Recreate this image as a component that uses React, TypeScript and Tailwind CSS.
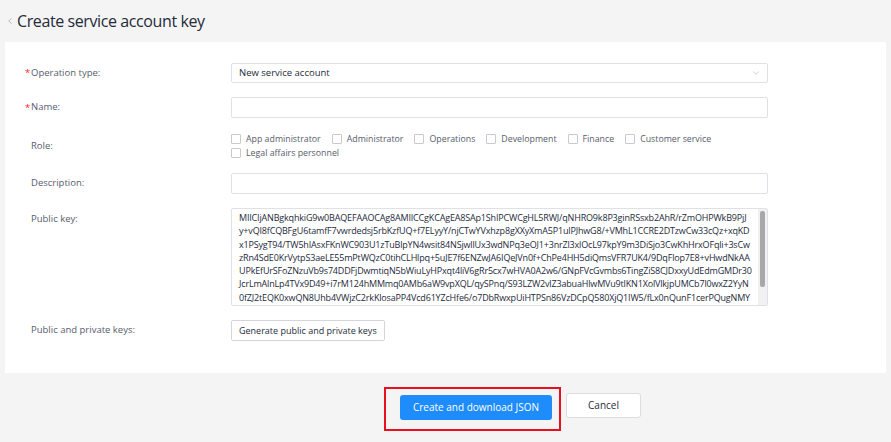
import { ChevronDown, ChevronLeft } from 'lucide-react';

const roles = [
  'App administrator',
  'Administrator',
  'Operations',
  'Development',
  'Finance',
  'Customer service',
  'Legal affairs personnel',
];

const keyLines = [
  'MIICIjANBgkqhkiG9w0BAQEFAAOCAg8AMIICCgKCAgEA8SAp1ShIPCWCgHL5RWJ/qNHRO9k8P3ginRSsxb2AhR/rZmOHPWkB9PjJ',
  'y+vQI8fCQBFgU6tamfF7vwrdedsj5rbKzfUQ+f7ELyyY/njCTwYVxhzp8gXXyXmA5P1ulPJhwG8/+VMhL1CCRE2DTzwCw33cQz+xqKD',
  'x1PSygT94/TW5hIAsxFKnWC903U1zTuBlpYN4wsit84NSjwllUx3wdNPq3eOJ1+3nrZl3xlOcL97kpY9m3DiSjo3CwKhHrxOFqli+3sCw',
  'zRn4SdE0KrVytpS3aeLE55mPtWQzC0tihCLHlpq+5uJE7f6ENZwJA6IQeJVn0f+ChPe4HH5diQmsVFR7UK4/9DqFlop7E8+vHwdNkAA',
  'UPkEfUrSFoZNzuVb9s74DDFjDwmtiqN5bWiuLyHPxqt4liV6gRr5cx7wHVA0A2w6/GNpFVcGvmbs6TingZiS8CJDxxyUdEdmGMDr30',
  'JcrLmAlnLp4TVx9D49+i7rM124hMMmq0AMb6aW9vpXQL/qySPnq/S93LZW2vlZ3abuaHlwMVu9tlKN1XolVlkjpUMCb7l0wxZ2YyN',
  '0fZJ2tEQK0xwQN8Uhb4VWjzC2rkKlosaPP4Vcd61YZcHfe6/o7DbRwxpUiHTPSn86VzDCpQ580XjQ1IW5/fLx0nQunF1cerPQugNMY',
  'eJrBnQ1hXkP2wVt7Y9sZ3dA5',
];

function Label({ text, required }: { text: string; required?: boolean }) {
  return (
    <div className="flex w-[226px] shrink-0 items-center pl-[20px] text-[9.5px] text-[#575d6c]">
      <span className="w-[6px] text-[#f22] leading-none">{required ? '*' : ''}</span>
      <span>{text}:</span>
    </div>
  );
}

function Checkbox({ label }: { label: string }) {
  return (
    <div className="mr-[11px] flex items-center gap-[5px]">
      <span className="h-[10px] w-[10px] rounded-[1px] border border-[#c8cad0] bg-white" />
      <span>{label}</span>
    </div>
  );
}

export default function App() {
  return (
    <div className="h-[442px] w-[891px] overflow-hidden bg-[#f4f4f4] font-['Open_Sans',sans-serif] text-[#252b3a]">
      <div className="flex h-[42px] items-center pl-[5px]">
        <ChevronLeft className="h-[10px] w-[10px] text-[#aaa]" strokeWidth={2} />
        <h1 className="ml-[2px] text-[16px] leading-none tracking-[-0.4px]">Create service account key</h1>
      </div>

      <div className="mx-[5px] h-[331px] bg-white pt-[21px]">
        <div className="flex h-[20px]">
          <Label text="Operation type" required />
          <div className="flex w-[537px] items-center justify-between rounded-[2px] border border-[#dfe1e6] pl-[7px] pr-[6px] text-[9.5px]">
            <span>New service account</span>
            <ChevronDown className="h-[10px] w-[10px] text-[#b0b3ba]" strokeWidth={1.5} />
          </div>
        </div>

        <div className="mt-[14px] flex h-[21px]">
          <Label text="Name" required />
          <div className="w-[537px] rounded-[2px] border border-[#dfe1e6]" />
        </div>

        <div className="mt-[14px] flex h-[28px]">
          <Label text="Role" />
          <div className="flex w-[537px] flex-wrap content-between text-[8.8px] leading-[14px] text-[#575d6c]">
            {roles.map((r) => (
              <Checkbox key={r} label={r} />
            ))}
          </div>
        </div>

        <div className="mt-[13px] flex h-[21px]">
          <Label text="Description" />
          <div className="w-[537px] rounded-[2px] border border-[#dfe1e6]" />
        </div>

        <div className="mt-[14px] flex h-[98px]">
          <div className="flex w-[226px] shrink-0 items-start pl-[26px] pt-[4px] text-[9.5px] text-[#575d6c]">
            Public key:
          </div>
          <div className="relative flex w-[537px] overflow-hidden rounded-[2px] border border-[#dfe1e6]">
            <div className="flex-1 overflow-hidden pl-[7px] pt-[2px] text-[9px] leading-[13.3px] tracking-[-0.17px] text-[#252b3a]">
              {keyLines.map((l, i) => (
                <div key={i} className="whitespace-nowrap">
                  {l}
                </div>
              ))}
            </div>
            <div className="w-[9px] shrink-0 bg-[#f1f1f1] px-[2px] py-[2px]">
              <div className="h-[76px] rounded-[2px] bg-[#a8a8a8]" />
            </div>
          </div>
        </div>

        <div className="mt-[14px] flex h-[21px]">
          <Label text="Public and private keys" />
          <button className="rounded-[2px] border border-[#d3d5da] bg-white px-[7px] text-[9px] text-[#252b3a]">
            Generate public and private keys
          </button>
        </div>
      </div>

      <div className="mt-[14px] flex pl-[384px]">
        <div className="border-2 border-[#e8101e] pb-[9px] pl-[14px] pr-[7px] pt-[4px]">
          <button className="h-[25px] w-[152px] rounded-[3px] bg-[#1e8cfa] text-[10px] text-white">
            Create and download JSON
          </button>
        </div>
        <button className="ml-[5px] mt-[6px] h-[25px] w-[75px] rounded-[3px] border border-[#dcdde0] bg-white text-[10px] text-[#252b3a]">
          Cancel
        </button>
      </div>
    </div>
  );
}
